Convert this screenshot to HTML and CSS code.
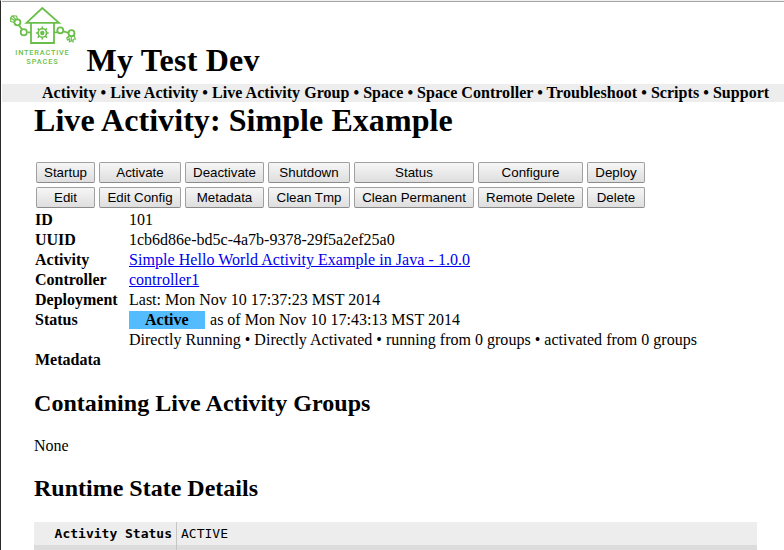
FILE: index.html
```html
<!DOCTYPE html>
<html lang="en">
<head>
<meta charset="utf-8">
<title>Live Activity: Simple Example</title>
<link rel="stylesheet" href="styles.css">
</head>
<body>
<div class="window">
  <header class="masthead">
    <svg class="logo" viewBox="0 0 76 66" width="76" height="66" fill="none" stroke="#6abf4b" stroke-width="1.8">
      <path d="M24.5 20.8 40.3 6 57 20.8ZM29 21v20h23V21"/>
      <path d="M29 30.3h-3M20.5 28l-4-5.4M52 30.3h3M61.5 29.4l5 1.4"/>
      <circle cx="21.8" cy="30.3" r="3.1"/><circle cx="15.4" cy="20.3" r="3"/>
      <circle cx="58.3" cy="28.3" r="3"/><circle cx="69.5" cy="31.2" r="3"/>
      <path stroke-width="1.2" d="M12.8 20.5 8.8 19.5 8.6 16 10.2 13.8 14.5 14 15.5 17.3M8.8 16l4.5 3M10.2 13.8l4 4.2"/>
      <path stroke-width="1.2" d="M67.5 33.6 64.8 35.8 65.4 38 67.6 37.4 67.4 39.8 69.6 38.6 71 39.8 71.2 37.2 73.4 37 72 33.4M69.3 34.2v4M67.8 36.5l-2-1"/>
      <circle cx="40.3" cy="31" r="4.2" stroke-width="1.6"/>
      <circle cx="40.3" cy="31" r="2.2" fill="#6abf4b" stroke="none"/>
      <path stroke-width="1.6" d="M40.3 24.6v2.2M40.3 35.2v2.2M33.9 31h2.2M44.5 31h2.2M35.7 26.4l1.5 1.5M43.4 34.1l1.5 1.5M35.7 35.6l1.5-1.5M43.4 27.9l1.5-1.5"/>
      <g class="logo-text">
        <text x="13.3" y="53.2" textLength="53.5">INTERACTIVE</text>
        <text x="24.3" y="62.2" textLength="31.5">SPACES</text>
      </g>
    </svg>
    <h1 class="site-title">My Test Dev</h1>
  </header>
  <nav class="nav">Activity • Live Activity • Live Activity Group • Space • Space Controller • Troubleshoot • Scripts • Support</nav>
  <main class="content">
    <h1 class="page-title">Live Activity: Simple Example</h1>
    <div class="commands">
      <button>Startup</button><button>Activate</button><button>Deactivate</button><button>Shutdown</button><button>Status</button><button>Configure</button><button>Deploy</button>
      <button>Edit</button><button>Edit Config</button><button>Metadata</button><button>Clean Tmp</button><button>Clean Permanent</button><button>Remote Delete</button><button>Delete</button>
    </div>
    <dl class="details">
      <dt>ID</dt><dd>101</dd>
      <dt>UUID</dt><dd>1cb6d86e-bd5c-4a7b-9378-29f5a2ef25a0</dd>
      <dt>Activity</dt><dd><a class="activity-link" href="#">Simple Hello World Activity Example in Java - 1.0.0</a></dd>
      <dt>Controller</dt><dd><a href="#">controller1</a></dd>
      <dt>Deployment</dt><dd>Last: Mon Nov 10 17:37:23 MST 2014</dd>
      <dt>Status</dt><dd><span class="state">Active</span> as of Mon Nov 10 17:43:13 MST 2014<br><span class="substate">Directly Running • Directly Activated • running from 0 groups • activated from 0 groups</span></dd>
      <dt>Metadata</dt><dd></dd>
    </dl>
    <h2 class="groups-title">Containing Live Activity Groups</h2>
    <p class="none">None</p>
    <h2>Runtime State Details</h2>
    <div class="runtime">
      <div class="runtime-row"><b class="key">Activity Status</b><span class="value">ACTIVE</span></div>
      <div class="runtime-row alt"><b class="key"></b><span class="value"></span></div>
    </div>
  </main>
</div>
</body>
</html>
```
FILE: styles.css
```css
* { box-sizing: border-box; }
body {
  margin: 0;
  height: 550px;
  overflow: hidden;
  background: #fff;
  color: #000;
  font: 16px/20px "Liberation Serif", serif;
}
.window {
  height: 550px;
  overflow: hidden;
  border-left: 1px solid #2c2a29;
  border-top: 1px solid #f2f1f0;
  padding-left: 1px;
}
.masthead {
  display: flex;
  height: 83px;
  border-top: 1px solid #a5a5a5;
}
.logo { flex: none; }
.logo-text {
  fill: #6abf4b;
  stroke: none;
  font: 500 7.4px Roboto, sans-serif;
}
h1 { margin: 0; font-size: 32px; line-height: 36px; }
.site-title { margin: 40px 0 0 8.5px; letter-spacing: 0.24px; }
.nav {
  height: 18px;
  padding-left: 40px;
  background: #ededed;
  font-weight: bold;
  letter-spacing: 0.041px;
  line-height: 18px;
  white-space: nowrap;
}
.content { padding: 0 27px 0 32px; }
.page-title { letter-spacing: 0.065px; }
.commands {
  display: grid;
  grid-template-columns: 59px 82px 79px 82px 120px 105px 58px;
  grid-auto-rows: 21px;
  gap: 4px;
  margin: 24px 0 2px 2px;
}
button {
  padding: 0;
  border: 1px solid #a0a0a0;
  border-bottom-color: #8b8b8b;
  border-radius: 2px;
  background: linear-gradient(#f6f6f6, #dedede);
  color: #000;
  font: 13.333px/17px "Liberation Sans", sans-serif;
  white-space: nowrap;
}
.details {
  display: grid;
  grid-template-columns: 94px 1fr;
  margin: 0 0 0 1px;
}
dt { font-weight: bold; }
dd { margin: 0; }
a { color: #0000ee; }
.activity-link { letter-spacing: 0.045px; }
.substate { letter-spacing: 0.012px; }
.state {
  display: inline-block;
  height: 18px;
  margin: 1px 1.5px 0 0;
  padding: 0 16px;
  background: #52bcff;
  font-weight: bold;
  line-height: 18px;
  vertical-align: top;
}
h2 { margin: 20px 0; font-size: 24px; line-height: 27px; }
.groups-title { letter-spacing: 0.05px; }
.none { margin: 0; line-height: 18px; }
.runtime { font: 13px/23px "DejaVu Sans Mono", monospace; }
.runtime-row {
  display: grid;
  grid-template-columns: 143px 1fr;
  height: 23px;
  background: #ededed;
}
.alt { background: #dcdcdc; }
.key {
  padding-right: 4px;
  border-right: 1px solid #c5c5c5;
  text-align: right;
}
.value { padding-left: 4px; }
```
